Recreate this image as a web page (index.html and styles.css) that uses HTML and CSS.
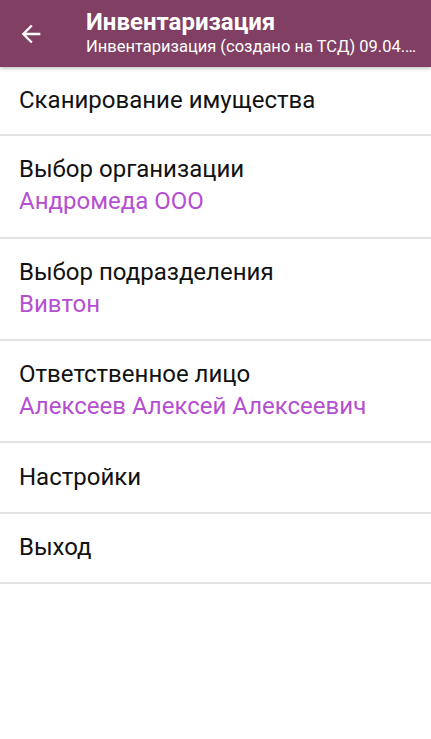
FILE: index.html
```html
<!DOCTYPE html>
<html lang="ru">
<head>
<meta charset="utf-8">
<link rel="stylesheet" href="styles.css">
</head>
<body>
<header class="appbar">
  <div class="back">
    <svg width="28" height="28" viewBox="0 0 24 24"><path d="M20 11H7.83l5.59-5.59L12 4l-8 8 8 8 1.41-1.41L7.83 13H20v-2z" fill="#fff"/></svg>
  </div>
  <div class="titles">
    <div class="title">Инвентаризация</div>
    <div class="subtitle">Инвентаризация (создано на ТСД) 09.04.2019 12:00:00</div>
  </div>
</header>
<ul class="menu">
  <li class="item single first">Сканирование имущества</li>
  <li class="item double tall"><div>Выбор организации</div><div class="value">Андромеда ООО</div></li>
  <li class="item double"><div>Выбор подразделения</div><div class="value">Вивтон</div></li>
  <li class="item double"><div>Ответственное лицо</div><div class="value">Алексеев Алексей Алексеевич</div></li>
  <li class="item single tall">Настройки</li>
  <li class="item single">Выход</li>
</ul>
</body>
</html>
```
FILE: styles.css
```css
* { box-sizing: border-box; }
html, body { margin: 0; padding: 0; background: #fff; }
body { font-family: Roboto, "Noto Sans", sans-serif; width: 431px; height: 739px; overflow: hidden; }
.appbar {
  position: relative;
  z-index: 1;
  height: 67px;
  background: #803f63;
  color: #fff;
  display: flex;
  align-items: center;
  box-shadow: 0 1px 4px rgba(0,0,0,0.3);
}
.back { width: 86px; padding-left: 17px; display: flex; align-items: center; }
.back svg { width: 28px; height: 28px; }
.titles { flex: 1; min-width: 0; padding-right: 14px; }
.title { font-size: 24px; font-weight: 700; line-height: 28px; margin-top: -3px; }
.subtitle { font-size: 16.5px; line-height: 20px; white-space: nowrap; overflow: hidden; text-overflow: ellipsis; margin-top: 1px; }
.menu { list-style: none; margin: 0; padding: 0; }
.item {
  font-size: 24px;
  line-height: 32px;
  color: #121212;
  padding: 0 19px;
  border-bottom: 2px solid #e3e3e3;
}
.single { height: 70px; padding-top: 17px; }
.single.first { height: 69px; padding-top: 17px; }
.single.tall { height: 71px; padding-top: 18px; }
.double { height: 102px; padding-top: 17px; }
.double.tall { height: 103px; padding-top: 17px; }
.value { color: #b54fd2; }
```
